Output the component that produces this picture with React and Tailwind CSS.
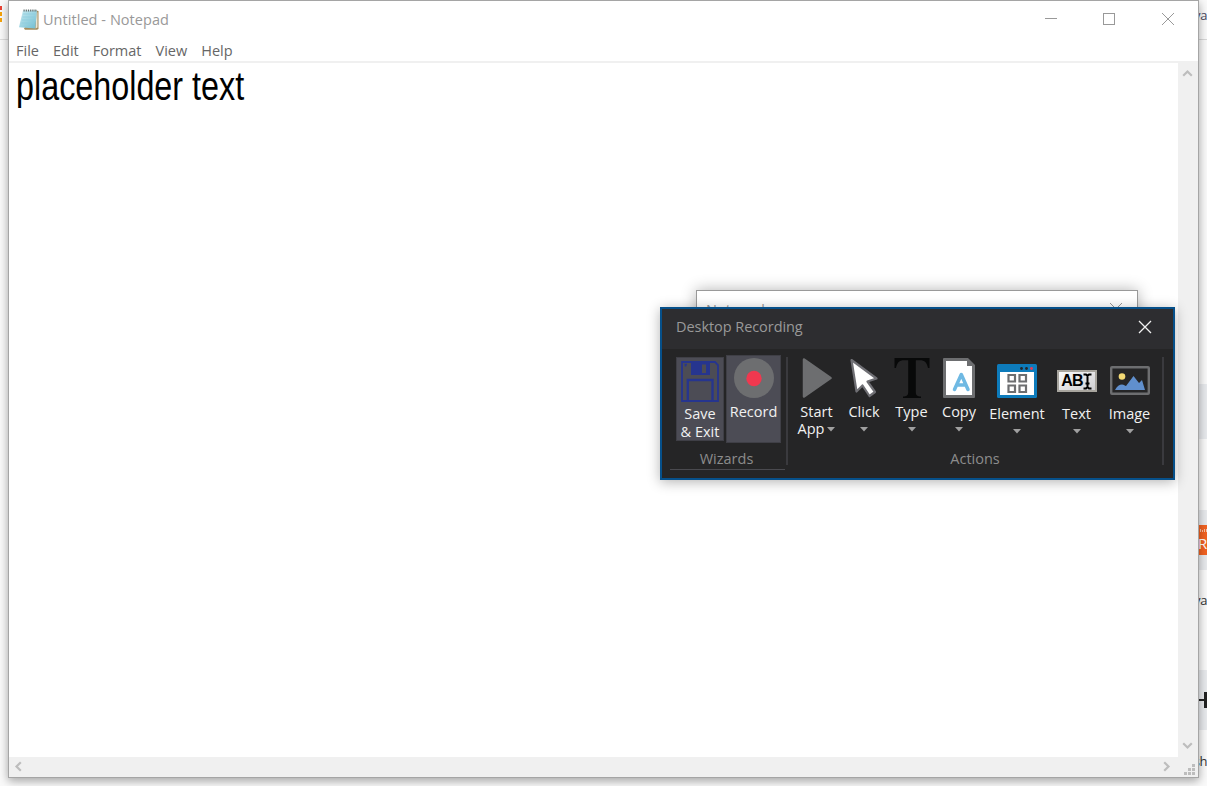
import React from "react";

const X = ({ size = 14, className, w = 1 }) => (
  <svg width={size} height={size} viewBox="0 0 14 14" className={className} fill="none" stroke="currentColor" strokeWidth={w}>
    <path d="M1 1 13 13M13 1 1 13" />
  </svg>
);

const Chevron = ({ rotate }) => (
  <svg width="11" height="11" viewBox="0 0 11 11" fill="none" stroke="#bdbdbd" strokeWidth="2.2" className={rotate}>
    <path d="M1.2 7.8 5.5 3.5 9.8 7.8" />
  </svg>
);

const NotepadIcon = () => (
  <svg width="20" height="21" viewBox="0 0 20 21" className="shrink-0">
    <defs>
      <linearGradient id="page" x1="0" y1="0" x2="1" y2="1">
        <stop offset="0" stopColor="#c9eaf1" />
        <stop offset="1" stopColor="#6fbdd1" />
      </linearGradient>
    </defs>
    <path d="M17 1.500 19.500 2V20L18 20.700H6L5 19.500Z" fill="#a58c5c" />
    <path d="M17.500 3 18.500 3.500V18.500L16.500 19.500Z" fill="#e8e4d4" />
    <path d="M4 1.500H18L16.200 19.500 0 18.200Z" fill="url(#page)" />
    <path d="M4 5H16.500M3.500 8H16M3 11H15.700M2.500 14H15.200" stroke="#8acbdc" strokeWidth=".7" />
    <path d="M4.500 1.500H18" stroke="#66706f" strokeWidth="2.200" strokeDasharray="1.200 1" />
  </svg>
);

const SaveIcon = () => (
  <svg width="38" height="41" viewBox="0 0 38 41" fill="none" stroke="#26358f" strokeWidth="1.8" className="shrink-0">
    <path d="M1 1H34L37 4V40H1Z" />
    <path d="M10 1H29V14H10Z" fill="#26358f" stroke="none" />
    <path d="M21 3.500H25V12H21Z" fill="#4c4c55" stroke="none" />
    <path d="M6.800 40V19H31.500V40" strokeWidth="2.300" />
    <path d="M3.500 3.500H6M4.500 3V5.500" strokeWidth="1.500" />
  </svg>
);
const RecordIcon = () => (
  <svg width="40" height="40" viewBox="0 0 40 40"><circle cx="20" cy="20" r="20" fill="#6d6e70" /><circle cx="20" cy="20.500" r="7.700" fill="#f0384f" /></svg>
);
const PlayIcon = () => (
  <svg width="30" height="40" viewBox="0 0 30 40"><path d="M2 1.500 28.500 20 2 38.500Z" fill="#6d6e70" stroke="#6d6e70" strokeWidth="2.500" strokeLinejoin="round" /></svg>
);
const CursorIcon = () => (
  <svg width="30" height="40" viewBox="0 0 30 40"><path d="M2.500 2 27.500 20.500 18.500 23.500 26 34 20.500 38 13.500 27.500 7.500 33.500Z" fill="#fff" stroke="#6f6f74" strokeWidth="2.200" strokeLinejoin="round" /></svg>
);
const TypeIcon = () => (
  <svg width="36" height="40" viewBox="0 0 36 40" fill="#080909"><path d="M0.500 0H35.500V10H34C33 4.500 30.500 2.200 26 2.200H21.800V34C21.800 37.500 23.500 38.300 27 38.500V40H9V38.500C12.500 38.300 14.200 37.500 14.200 34V2.200H10C5.500 2.200 3 4.500 2 10H.5Z" /></svg>
);
const CopyIcon = () => (
  <svg width="32" height="40" viewBox="0 0 32 40"><path d="M1 0H25L32 7V39Q32 40 31 40H1Q0 40 0 39V1Q0 0 1 0Z" fill="#6d6e70" /><path d="M3 3H24V8H29V37H3Z" fill="#fff" /><path d="M11.500 31.500 18.300 16.500 25 31.500M14 27H22.500" fill="none" stroke="#6fb9e3" strokeWidth="3.500" strokeLinecap="round" strokeLinejoin="round" /></svg>
);
const ElementIcon = () => (
  <svg width="40" height="34" viewBox="0 0 40 34"><rect width="40" height="34" rx="1.500" fill="#0d7bbb" /><path d="M3 8H37V31H3Z" fill="#fff" /><g fill="none" stroke="#6d6e70" strokeWidth="2.200"><path d="M11.500 11H18V17.500H11.500ZM22.500 11H29V17.500H22.500ZM11.500 21.500H18V28H11.500ZM22.500 21.500H29V28H22.500Z" /></g><circle cx="24.500" cy="4.500" r="1.400" fill="#23272b" /><circle cx="29.500" cy="4.500" r="1.400" fill="#23272b" /><circle cx="34.500" cy="4.500" r="1.400" fill="#f0384f" /></svg>
);
const TextIcon = () => (
  <div className="flex h-[22px] w-10 items-center justify-center border-2 border-[#a8a59e] bg-linear-to-br from-[#fafafa] to-[#cfcfd2] text-black">
    <span className="font-['Liberation_Sans'] text-[16px] leading-none font-bold tracking-[-0.8px]">AB</span>
    <svg width="9" height="17" viewBox="0 0 9 17" fill="none" stroke="#000" strokeWidth="2"><path d="M.5 1.500H3L4.500 3 6 1.500H8.500M4.500 2V15M.5 15.500H3L4.500 14 6 15.500H8.500M2.500 10.500H6.500" /></svg>
  </div>
);
const ImageIcon = () => (
  <svg width="40" height="29" viewBox="0 0 40 29"><rect x="1.200" y="1.200" width="37.600" height="26.600" rx=".8" fill="#252526" stroke="#6d6e70" strokeWidth="2.400" /><circle cx="12" cy="10.500" r="3.300" fill="#f2d974" /><path d="M5 24C7 20 9.500 18.500 12 18.500C14 18.500 15 20 16 20L23.500 10 29 17 32 14 35 24Z" fill="#608fcd" /></svg>
);

const Arrow = () => <svg width="8" height="5" viewBox="0 0 8 5"><path d="M0 0H8L4 4.500Z" fill="#a0a0a0" /></svg>;

const Action = ({ icon, label, width, low }) => (
  <div className={`flex shrink-0 flex-col items-center ${width} ${low ? "pt-[6px]" : ""}`}>
    {icon}
    <span className={`flex h-[18px] items-center whitespace-nowrap ${low ? "mt-[7px]" : "mt-[5px]"}`}>{label}</span>
    <span className="mt-[6px] flex"><Arrow /></span>
  </div>
);

const Backdrop = () => (
  <div className="flex h-full w-full justify-between overflow-hidden bg-[#fafafa] font-['Open_Sans'] text-[13px] tracking-[-0.4px] text-[#484860]">
    <div className="h-full w-[9px]">
      <div className="flex h-10 flex-col gap-[2px] border-b border-[#dedede] pt-[6px]">
        <i className="h-1 w-[2px] bg-[#ea4335]" />
        <i className="h-1 w-[2px] bg-[#f5a30a]" />
        <i className="h-1 w-[2px] bg-[#f5a30a]" />
      </div>
    </div>
    <div className="flex h-full w-[9px] flex-col">
      <div className="flex h-10 shrink-0 justify-end border-b border-[#d8d8d8] pt-[6px] leading-[18px]">va</div>
      <div className="h-[344px] shrink-0" />
      <div className="h-[55px] shrink-0 bg-[#e8eaed]" />
      <div className="h-[71px] shrink-0" />
      <div className="flex h-[60px] shrink-0 items-center bg-[#e8eaed]">
        <div className="h-[30px] w-full bg-[#f26322] text-white">
          <svg width="9" height="8" viewBox="0 0 9 8" className="block" stroke="#f9c4a8" strokeWidth="1"><path d="M2.500 4V7M4.500 5V7M6.500 4V7M8.500 4V7" /></svg>
          <span className="block text-[15px] leading-5">R</span>
        </div>
      </div>
      <div className="flex h-[100px] shrink-0 items-center justify-end pb-[38px] text-[#333]">va</div>
      <div className="flex h-[60px] shrink-0 items-center bg-[#e8eaed]">
        <svg width="9" height="16" viewBox="0 0 9 16"><path d="M0 7H6V0H9V16H6V9H0Z" fill="#222" /></svg>
      </div>
      <div className="flex h-[56px] shrink-0 items-end justify-end pb-[16px] leading-[18px] text-[#333]">sh</div>
    </div>
  </div>
);

const Notepad = () => (
  <div className="absolute top-0 left-2 flex h-[778px] w-[1191px] flex-col border border-[#a5a5a5] bg-white shadow-[0_3px_9px_rgba(0,0,0,0.35)]">
    <div className="flex h-[37px] shrink-0 items-center pl-[10px] text-[#999]">
      <NotepadIcon />
      <span className="ml-[4px] text-[14.5px] tracking-[0.05px]">Untitled - Notepad</span>
      <div className="mb-[2px] ml-auto flex items-center gap-[46px] pr-[23px]">
        <i className="h-px w-3 bg-[#999]" />
        <i className="size-3 border border-[#999]" />
        <X />
      </div>
    </div>
    <div className="flex h-[25px] shrink-0 items-center gap-[14px] border-b-2 border-[#f0f0f0] pt-[3px] pl-[7px] text-[14.5px] text-[#666]">
      {["File", "Edit", "Format", "View", "Help"].map((t) => <span key={t}>{t}</span>)}
    </div>
    <div className="flex min-h-0 flex-1">
      <div className="-mt-px flex-1 pl-[7px] text-black">
        <span className="inline-block origin-left scale-x-[0.808] font-['Liberation_Sans'] text-[40px] leading-[48px] whitespace-nowrap">placeholder text</span>
      </div>
      <div className="flex w-5 shrink-0 flex-col items-center justify-between bg-[#f0f0f0] pt-[5px] pr-[2px] pb-[6px]">
        <Chevron /><Chevron rotate="rotate-180" />
      </div>
    </div>
    <div className="flex h-5 shrink-0 items-center bg-[#f0f0f0] pb-px pl-[4px]">
      <Chevron rotate="-rotate-90" />
      <span className="ml-auto flex"><Chevron rotate="rotate-90" /></span>
      <svg width="12" height="12" viewBox="0 0 12 12" fill="#bdbdbd" className="mt-[6px] mr-[2px] ml-[12px]">
        <path d="M8 0H11V3H8ZM8 4H11V7H8ZM4 4H7V7H4ZM0 8H3V11H0ZM4 8H7V11H4ZM8 8H11V11H8Z" />
      </svg>
    </div>
  </div>
);

const Recorder = () => (
  <div className="absolute top-[307px] left-[660px] flex h-[173px] w-[515px] flex-col border-2 border-[#06508a] bg-[#252526] text-[14.5px] text-[#f1f1f1] shadow-[0_2px_12px_rgba(0,0,0,0.3)]">
    <div className="flex h-10 shrink-0 items-center justify-between bg-[#2d2d30] pr-[21px] pb-[4px] pl-[14px] text-[#999]">
      <span className="tracking-[-0.06px]">Desktop Recording</span>
      <X className="text-[#f1f1f1]" w={1.3} />
    </div>
    <div className="flex min-h-0 flex-1 pl-2">
      <div className="mb-[8px] flex w-[115px] flex-col border-b border-[#4a4a4f]">
        <div className="flex gap-[2px] pt-[6px] pl-[6px] leading-[18px]">
          <div className="mt-[2px] flex h-[84px] w-12 flex-col items-center border border-[#3f3f46] bg-[#4c4c55] pt-[3px]">
            <SaveIcon />
            <span className="mt-[3px] text-center whitespace-nowrap">Save<br />&amp; Exit</span>
          </div>
          <div className="flex h-[88px] w-[55px] flex-col items-center border border-[#3f3f46] bg-[#4c4c55] pt-[2px]">
            <RecordIcon />
            <span className="mt-[5px]">Record</span>
          </div>
        </div>
        <div className="mt-[6px] pr-[2px] text-center leading-5 text-[#8c8c8c]">Wizards</div>
      </div>
      <div className="mt-[8px] ml-px h-[108px] w-[2px] bg-[#3a3a3e]" />
      <div className="flex w-[374px] flex-col pt-[9px]">
        <div className="flex h-[91px] pl-[4px]">
          <div className="flex w-[49px] flex-col items-center">
            <PlayIcon />
            <span className="mt-[5px] leading-[18px]">Start</span>
            <span className="flex items-center gap-[3px] leading-[16px]">App <Arrow /></span>
          </div>
          <Action icon={<CursorIcon />} label="Click" width="w-[46px]" />
          <Action icon={<TypeIcon />} label="Type" width="w-[49px]" />
          <Action icon={<CopyIcon />} label="Copy" width="w-[46px]" />
          <Action icon={<ElementIcon />} label="Element" width="w-[70px]" low />
          <Action icon={<span className="flex h-[34px] items-center"><TextIcon /></span>} label="Text" width="w-[49px]" low />
          <Action icon={<span className="flex h-[34px] items-center pb-px"><ImageIcon /></span>} label="Image" width="w-[57px]" low />
        </div>
        <div className="text-center leading-5 text-[#8c8c8c]">Actions</div>
      </div>
      <div className="mt-[8px] h-[108px] w-[2px] bg-[#3a3a3e]" />
    </div>
  </div>
);

export default function App() {
  return (
    <main className="relative h-[786px] w-[1207px] overflow-hidden font-['Open_Sans',sans-serif]">
      <Backdrop />
      <Notepad />
      <div className="absolute top-[290px] left-[696px] flex h-[100px] w-[442px] items-start justify-between border border-[#999] bg-white pt-[9px] pr-[14px] pl-[9px] text-[14.5px] leading-5 text-[#999] shadow-[0_0_14px_rgba(0,0,0,0.3)]">
        <span>Notepad</span>
        <X className="mt-[2px]" />
      </div>
      <Recorder />
    </main>
  );
}
